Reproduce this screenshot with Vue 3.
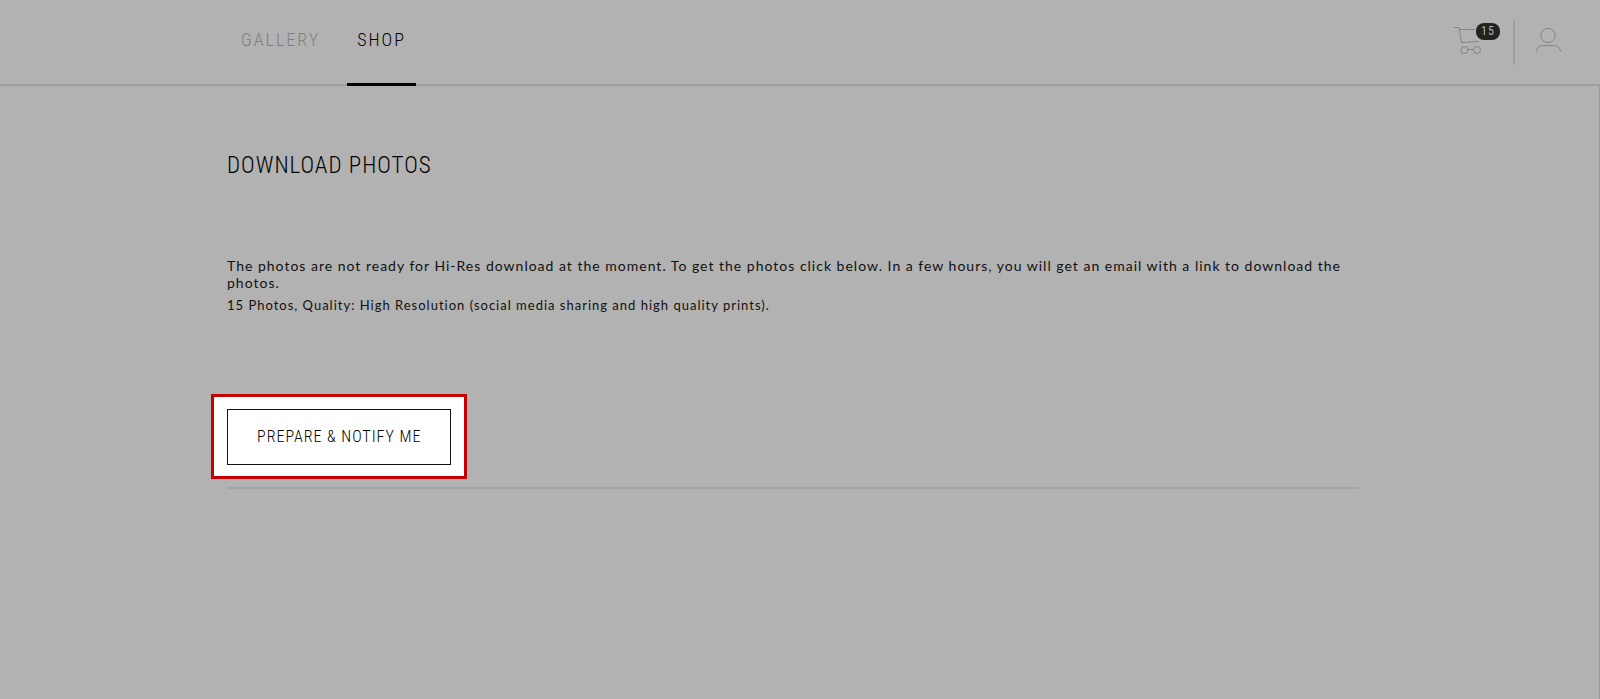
<script setup>
const photoCount = 15
const tabs = [
  { label: 'GALLERY', href: '#gallery', active: false },
  { label: 'SHOP', href: '#shop', active: true }
]
</script>

<template>
  <div class="page">
    <header class="topbar">
      <nav class="tabs" aria-label="Main">
        <a
          v-for="tab in tabs"
          :key="tab.label"
          :href="tab.href"
          class="tab"
          :class="{ active: tab.active }"
          :aria-current="tab.active ? 'page' : undefined"
        >{{ tab.label }}</a>
      </nav>
      <div class="tools">
        <a class="cart" href="#cart" aria-label="Cart">
          <svg width="48" height="34" viewBox="0 0 48 34" fill="none" stroke="#858585" aria-hidden="true">
            <path d="M1 7.5H6L8.5 22.5L26 21.5M6.5 9.5H22M15 29.5H20.5" />
            <circle cx="11.5" cy="30" r="3.5" />
            <circle cx="24" cy="30" r="3.5" />
          </svg>
          <span class="badge">{{ photoCount }}</span>
        </a>
        <span class="divider"></span>
        <a class="account" href="#account" aria-label="Account">
          <svg width="26" height="26" viewBox="0 0 26 26" fill="none" stroke="#858585" aria-hidden="true">
            <circle cx="12" cy="7.5" r="7.2" />
            <path d="M.5 24C.5 20 3 17.5 7 17.5H17.5C21.5 17.5 24.5 20 24.5 24" />
          </svg>
        </a>
      </div>
    </header>

    <main class="content">
      <section class="download">
        <h1>DOWNLOAD PHOTOS</h1>
        <p>
          The photos are not ready for Hi-Res download at the moment. To get the photos click below.
          In a few hours, you will get an email with a link to download the photos.
        </p>
        <p class="summary">{{ photoCount }} Photos, Quality: High Resolution (social media sharing and high quality prints).</p>
        <div class="highlight">
          <button type="button">PREPARE &amp; NOTIFY ME</button>
        </div>
      </section>
    </main>
  </div>
</template>

<style>
body {
  background: #b2b2b2;
}
</style>

<style scoped>
.page {
  display: flex;
  flex-direction: column;
  min-height: 100vh;
  background: #b2b2b2;
  color: #111;
  font-family: Lato, "Liberation Sans", sans-serif;
}
.topbar {
  display: flex;
  justify-content: space-between;
  height: 84px;
  padding: 0 38px 0 231px;
  border-bottom: 2px solid #9f9f9f;
}
.tabs {
  display: flex;
  gap: 17px;
}
.tab {
  height: 83px;
  padding: 0 10px;
  border-bottom: 3px solid transparent;
  color: #808080;
  font: 350 18px/80px "Roboto Condensed", Roboto, sans-serif;
  letter-spacing: 2px;
  text-decoration: none;
}
.tab.active {
  border-bottom-color: #000;
  color: #000;
}
.tools {
  display: flex;
  align-items: flex-start;
  padding-top: 20px;
}
.cart {
  position: relative;
  margin-right: 12px;
}
.cart svg,
.account svg {
  display: block;
}
.badge {
  position: absolute;
  top: 3px;
  right: 1px;
  width: 24px;
  height: 17px;
  border-radius: 8px;
  background: #222;
  color: #b2b2b2;
  font: 12px/16px "Roboto Condensed", Roboto, sans-serif;
  letter-spacing: 1px;
  text-align: center;
}
.divider {
  width: 2px;
  height: 45px;
  background: #9f9f9f;
}
.account {
  margin: 8px 0 0 21px;
}
.content {
  flex: 1;
  padding: 65px 241px 0 227px;
  border-right: 1px solid #999;
}
.download {
  padding-bottom: 8px;
  border-bottom: 2px solid #a3a3a3;
}
h1 {
  margin: 0 0 76px;
  color: #000;
  font: 350 23px/30px "Roboto Condensed", Roboto, sans-serif;
  letter-spacing: 1px;
}
p {
  margin: 0 0 6px;
  font-size: 14px;
  line-height: 17px;
  letter-spacing: 1px;
}
.summary {
  font-size: 13px;
}
.highlight {
  width: fit-content;
  margin: 80px 0 0 -16px;
  padding: 12px 13px 11px;
  border: 3px solid #c40000;
  background: #fff;
}
button {
  display: block;
  height: 56px;
  padding: 0 29px;
  border: 1px solid #111;
  border-radius: 0;
  background: #fff;
  color: #000;
  font: 350 16px/20px "Roboto Condensed", Roboto, sans-serif;
  letter-spacing: 1px;
}
</style>
